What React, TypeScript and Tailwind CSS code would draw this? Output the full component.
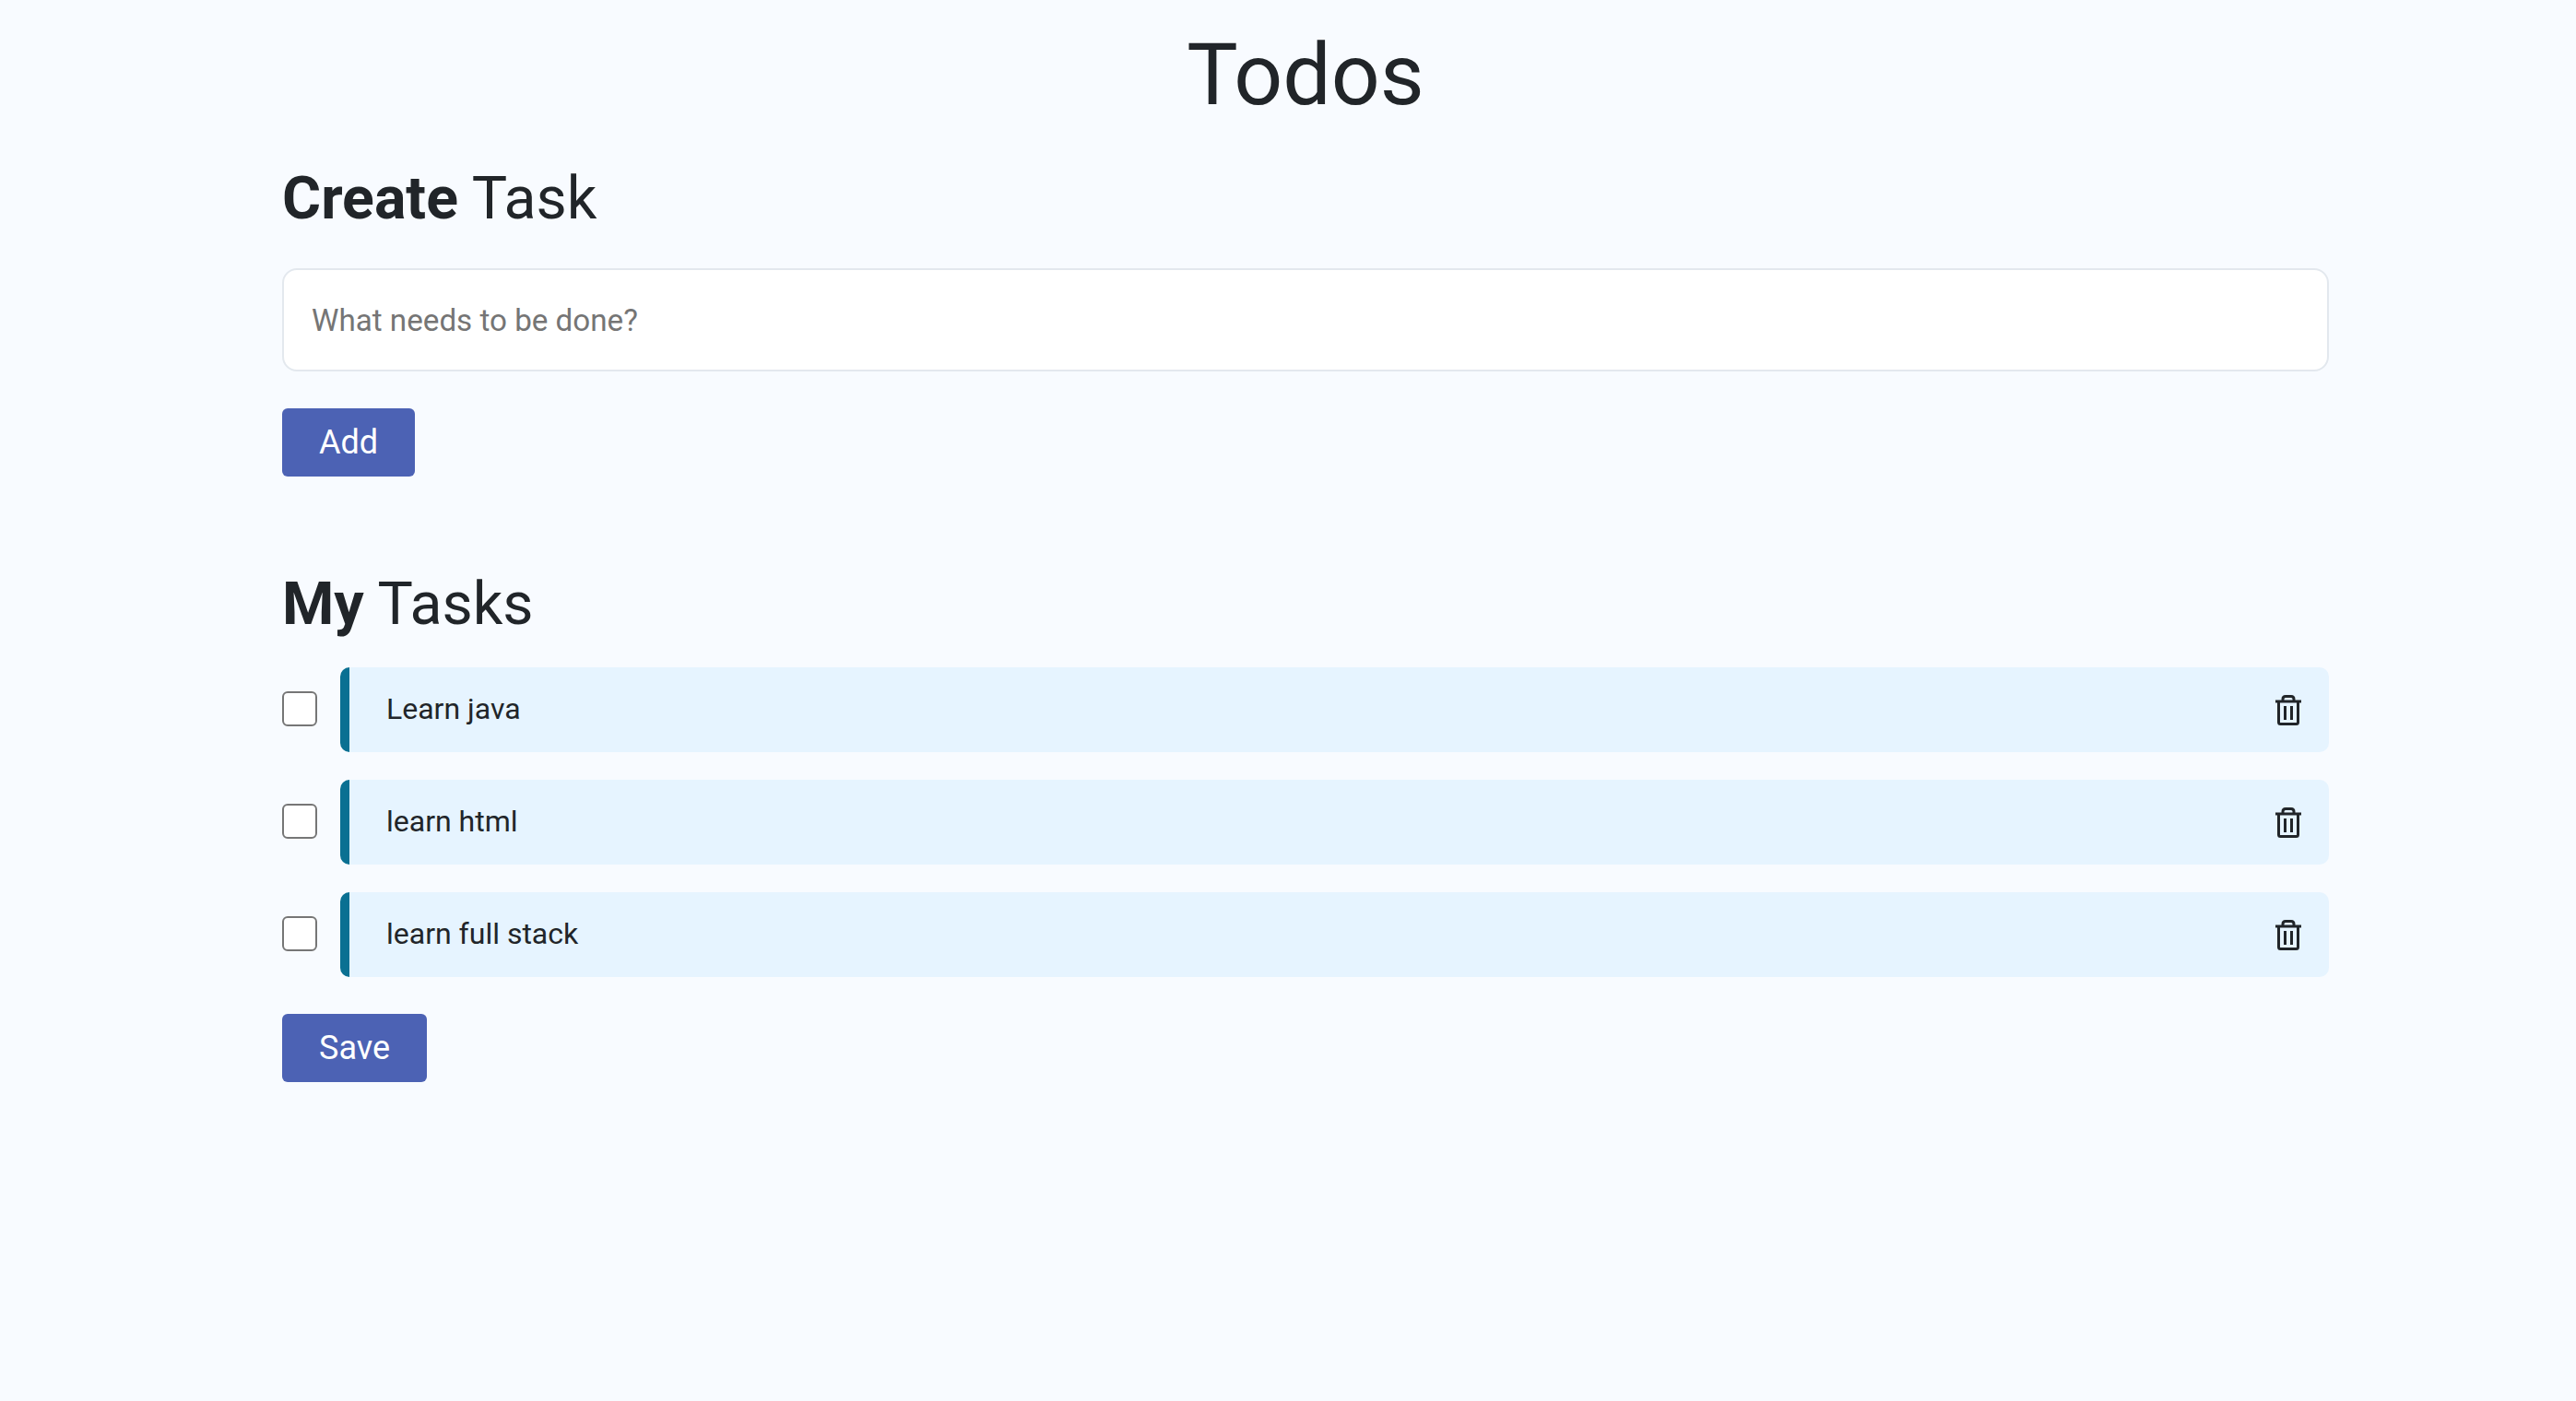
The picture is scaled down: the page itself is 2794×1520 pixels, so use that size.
const Trash = () => (
  <svg width="28" height="33" viewBox="0 0 28 33" fill="none" stroke="#212529" strokeWidth="3" className="block">
    <path d="M0 7H28" />
    <path d="M8 6V4.5C8 2.5 9.5 1.5 11 1.5H17C18.5 1.5 20 2.5 20 4.5V6" />
    <path d="M3.5 7V29.5C3.5 30.8 4.2 31.5 5.5 31.5H22.5C23.8 31.5 24.5 30.8 24.5 29.5V7" />
    <path d="M10.5 12V27M17.5 12V27" />
  </svg>
);

const tasks = ["Learn java", "learn html", "learn full stack"];

export default function App() {
  return (
    <div className="min-h-screen bg-[#f8fbff] text-[#212529] font-['Roboto',sans-serif]">
      <div className="ml-[306px] w-[2220px]">
        <h1 className="text-[93px] leading-[115px] font-normal text-center pt-[24px]">Todos</h1>
        <h2 className="text-[64.4px] leading-[77px] font-normal mt-[38px]">
          <span className="font-bold">Create</span> Task
        </h2>
        <input
          placeholder="What needs to be done?"
          className="block w-full h-[112px] mt-[37px] px-[30px] text-[33.2px] bg-white border-2 border-[#e3e8ee] rounded-[16px] outline-none placeholder:text-[#757575]"
        />
        <button className="block h-[74px] w-[144px] mt-[40px] bg-[#4c62b4] text-white text-[36px] rounded-[6px]">Add</button>
        <h2 className="text-[64.4px] leading-[77px] font-normal mt-[100px]">
          <span className="font-bold">My</span> Tasks
        </h2>
        <div className="mt-[30px] flex flex-col gap-[30px]">
          {tasks.map((t) => (
            <div key={t} className="flex items-center gap-[25px]">
              <span className="block w-[38px] h-[38px] -mt-[2px] bg-white border-2 border-[#767676] rounded-[6px] shrink-0" />
              <div className="flex-1 h-[92px] flex items-center justify-between bg-[#e6f4ff] border-l-[10px] border-[#0a7092] rounded-[10px] pl-[40px] pr-[30px]">
                <span className="text-[32px] -mt-[2px]">{t}</span>
                <Trash />
              </div>
            </div>
          ))}
        </div>
        <button className="block h-[74px] w-[157px] mt-[40px] bg-[#4c62b4] text-white text-[36px] rounded-[6px]">Save</button>
      </div>
    </div>
  );
}
